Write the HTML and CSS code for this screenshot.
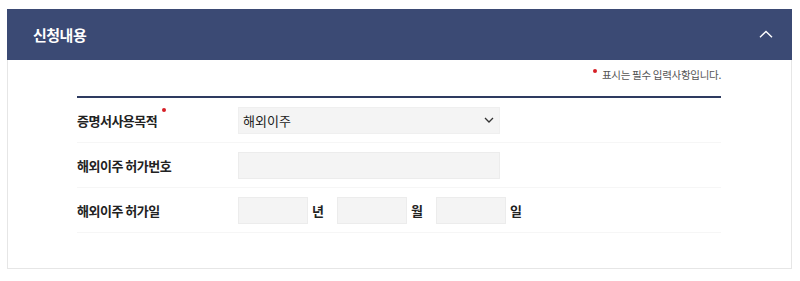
FILE: index.html
```html
<!doctype html>
<html>
<head>
    <meta charset="utf-8" />
    <title>신청내용</title>
    <link rel="stylesheet" href="styles.css">
</head>
<body>
<div class="panel">
    <div class="panel-head">
        <h2>신청내용</h2>
        <svg class="toggle" width="14" height="8" viewBox="0 0 14 8"><path d="M1 7.2L7 1.4L13 7.2" fill="none" stroke="#fff" stroke-width="1.4"/></svg>
    </div>
    <div class="panel-body">
        <p class="note"><span class="dot"></span>표시는 필수 입력사항입니다.</p>
        <div class="form">
            <div class="row">
                <div class="label">증명서사용목적<span class="dot req"></span></div>
                <div class="field">
                    <div class="select">
                        <span>해외이주</span>
                        <svg width="10" height="6" viewBox="0 0 10 6"><path d="M1 1L5 5L9 1" fill="none" stroke="#333" stroke-width="1.3"/></svg>
                    </div>
                </div>
            </div>
            <div class="row">
                <div class="label">해외이주 허가번호</div>
                <div class="field"><input class="input wide" type="text"></div>
            </div>
            <div class="row">
                <div class="label">해외이주 허가일</div>
                <div class="field date">
                    <input class="input small" type="text"><span class="unit">년</span>
                    <input class="input small" type="text"><span class="unit">월</span>
                    <input class="input small" type="text"><span class="unit">일</span>
                </div>
            </div>
        </div>
    </div>
</div>
</body>
</html>
```

FILE: styles.css
```css
*{
    margin:0px;
    padding:0px;
    box-sizing:border-box;
}
html,body{
    background-color:#fff;
    font-family:'Noto Sans CJK KR','Noto Sans',sans-serif;
    color:#222;
}
.panel{
    margin:9px 8px 0px 7px;
    border:1px solid #e6e6e6;
    border-top:none;
}
.panel-head{
    height:51px;
    background-color:#3b4a74;
    display:flex;
    align-items:center;
    justify-content:space-between;
    padding:0px 19px 0px 26px;
    margin:0px -1px;
}
.panel-head h2{
    color:#fff;
    font-size:15px;
    font-weight:bold;
    letter-spacing:-0.5px;
}
.toggle{
    margin-top:-1px;
}
.panel-body{
    padding:7px 70px 35px 69px;
}
.note{
    text-align:right;
    font-size:10.5px;
    color:#555;
    letter-spacing:-0.3px;
    line-height:16px;
    padding-bottom:13px;
    border-bottom:2px solid #2e3b60;
}
.dot{
    display:inline-block;
    width:4px;
    height:4px;
    border-radius:50%;
    background-color:#d61f26;
    vertical-align:top;
    margin:2px 5px 0px 0px;
}
.dot.req{
    margin:-24px 0px 0px 5px;
    vertical-align:middle;
}
.row{
    display:flex;
    align-items:center;
    height:45px;
    border-bottom:1px solid #f6f6f6;
}
.label{
    width:161px;
    font-size:13px;
    font-weight:bold;
    letter-spacing:-0.5px;
}
.field{
    display:flex;
    align-items:center;
}
.select{
    width:262px;
    height:27px;
    background-color:#f4f4f4;
    border:1px solid #efefef;
    display:flex;
    align-items:center;
    justify-content:space-between;
    padding:0px 5px 0px 4px;
    font-size:13px;
    color:#222;
}
.input{
    height:27px;
    background-color:#f4f4f4;
    border:1px solid #ececec;
    outline:none;
}
.input.wide{
    width:262px;
}
.input.small{
    width:70px;
}
.unit{
    font-size:13px;
    font-weight:bold;
    width:29px;
    padding-left:4px;
}
```
